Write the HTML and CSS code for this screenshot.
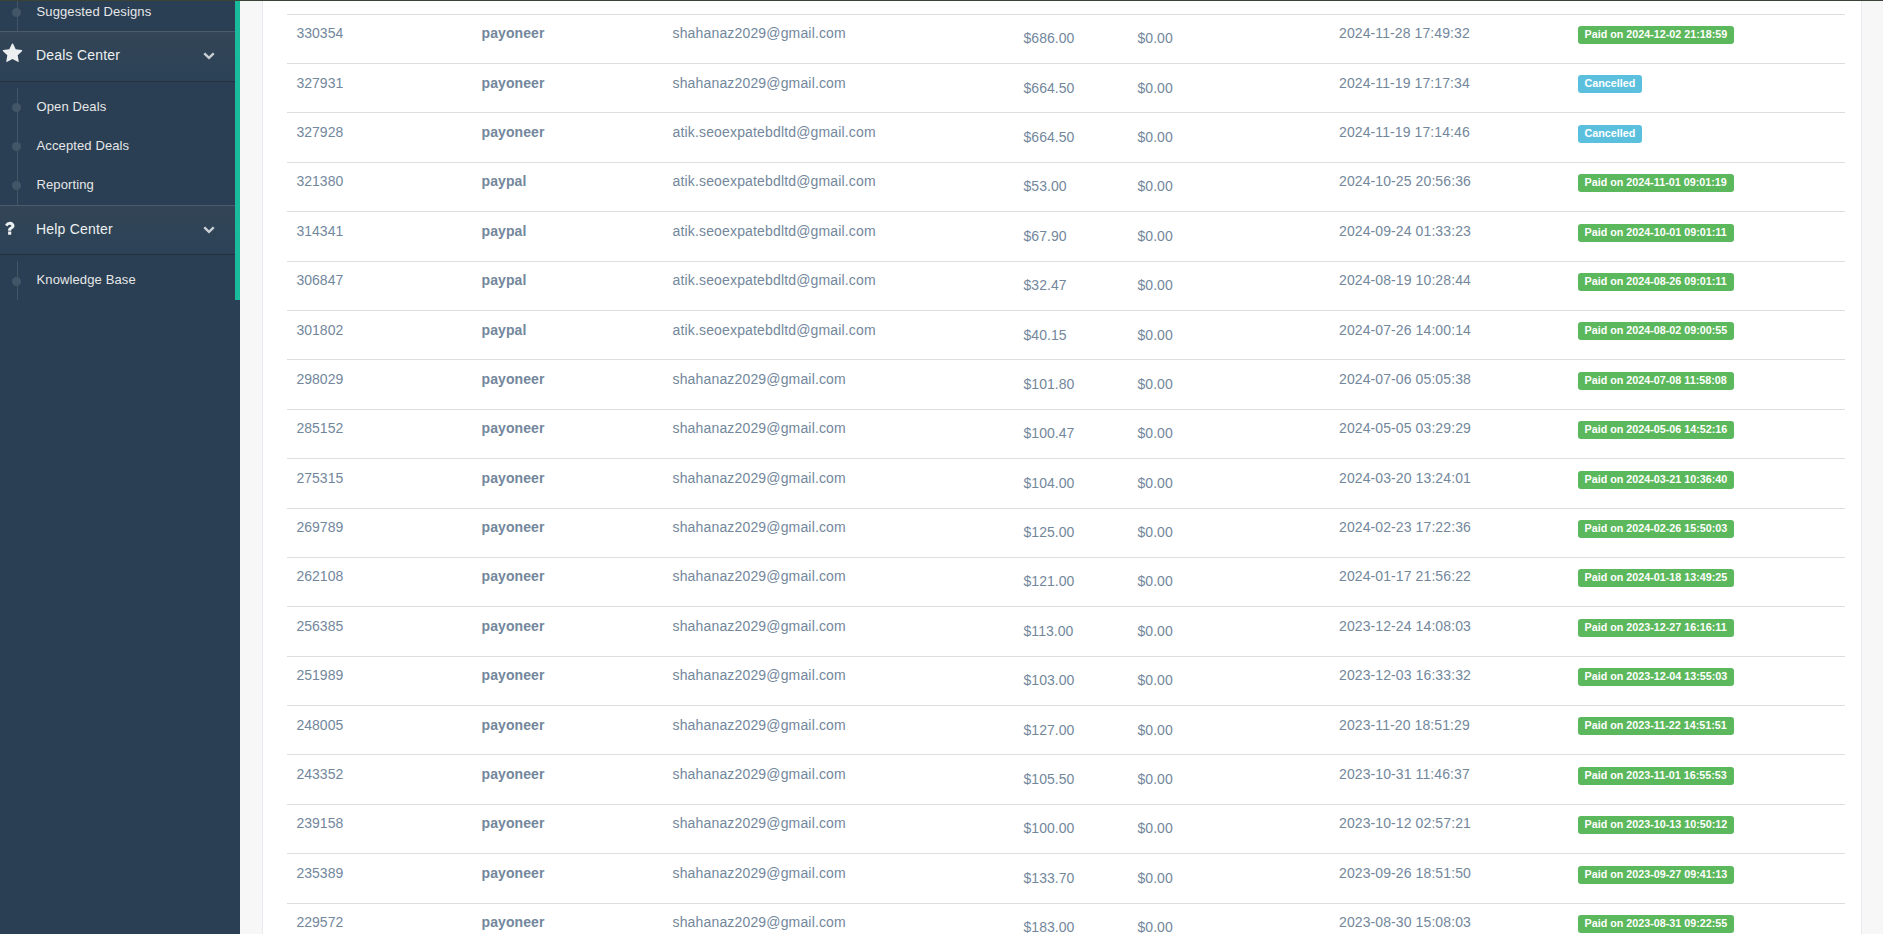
FILE: index.html
```html
<!DOCTYPE html>
<html lang="en">
<head>
<meta charset="utf-8">
<title>Payouts</title>
<link rel="stylesheet" href="styles.css">
</head>
<body>
<div class="page">
  <aside class="sidebar">
    <div class="nav">
      <ul class="sub sub-first"><li>Suggested Designs</li></ul>
      <div class="head">
        <svg class="ico star" viewBox="0 0 1792 1792"><path d="M1728 647q0 22-26 48l-363 354 86 500q1 7 1 20 0 21-10.5 35.5t-30.5 14.5q-19 0-40-12l-449-236-449 236q-22 12-40 12-21 0-31.5-14.5t-10.5-35.5q0-6 2-20l86-500-364-354q-25-27-25-48 0-37 56-46l502-73 225-455q19-41 49-41t49 41l225 455 502 73q56 9 56 46z"/></svg>
        <span>Deals Center</span>
        <svg class="chev" viewBox="0 0 1792 1792"><path d="M1683 808l-742 741q-19 19-45 19t-45-19l-742-741q-19-19-19-45.5t19-45.5l166-165q19-19 45-19t45 19l531 531 531-531q19-19 45-19t45 19l166 165q19 19 19 45.5t-19 45.5z"/></svg>
      </div>
      <ul class="sub"><li>Open Deals</li><li>Accepted Deals</li><li>Reporting</li></ul>
      <div class="head">
        <svg class="ico help" viewBox="0 0 1792 1792"><path d="M1024 1376v240q0 16-12 28t-28 12h-240q-16 0-28-12t-12-28v-240q0-16 12-28t28-12h240q16 0 28 12t12 28zm316-600q0 54-15.5 101t-35 76.5-55 59.5-57.5 43.5-61 35.5q-41 23-68.5 65t-27.5 67q0 17-12 32.5t-28 15.5h-240q-15 0-25.5-18.5t-10.5-37.5v-45q0-83 65-156.5t143-108.5q59-27 84-56t25-76q0-42-46.5-74t-107.5-32q-65 0-108 29-35 25-107 115-13 16-31 16-12 0-25-8l-164-125q-13-10-15.5-25t5.5-28q160-266 464-266 80 0 161 31t146 83 106 127.5 41 158.5z"/></svg>
        <span>Help Center</span>
        <svg class="chev" viewBox="0 0 1792 1792"><path d="M1683 808l-742 741q-19 19-45 19t-45-19l-742-741q-19-19-19-45.5t19-45.5l166-165q19-19 45-19t45 19l531 531 531-531q19-19 45-19t45 19l166 165q19 19 19 45.5t-19 45.5z"/></svg>
      </div>
      <ul class="sub"><li>Knowledge Base</li></ul>
    </div>
  </aside>
  <main class="content">
    <section class="card">
      <table class="payouts">
        <colgroup><col class="c1"><col class="c2"><col class="c3"><col class="c4"><col class="c5"><col class="c6"><col class="c7"></colgroup>
        <tbody>
          <tr><td>330354</td><td class="m">payoneer</td><td class="e">shahanaz2029@gmail.com</td><td class="a">$686.00</td><td class="a">$0.00</td><td class="d">2024-11-28 17:49:32</td><td><span class="label ok">Paid on 2024-12-02 21:18:59</span></td></tr>
          <tr><td>327931</td><td class="m">payoneer</td><td class="e">shahanaz2029@gmail.com</td><td class="a">$664.50</td><td class="a">$0.00</td><td class="d">2024-11-19 17:17:34</td><td><span class="label no">Cancelled</span></td></tr>
          <tr><td>327928</td><td class="m">payoneer</td><td class="e">atik.seoexpatebdltd@gmail.com</td><td class="a">$664.50</td><td class="a">$0.00</td><td class="d">2024-11-19 17:14:46</td><td><span class="label no">Cancelled</span></td></tr>
          <tr><td>321380</td><td class="m">paypal</td><td class="e">atik.seoexpatebdltd@gmail.com</td><td class="a">$53.00</td><td class="a">$0.00</td><td class="d">2024-10-25 20:56:36</td><td><span class="label ok">Paid on 2024-11-01 09:01:19</span></td></tr>
          <tr><td>314341</td><td class="m">paypal</td><td class="e">atik.seoexpatebdltd@gmail.com</td><td class="a">$67.90</td><td class="a">$0.00</td><td class="d">2024-09-24 01:33:23</td><td><span class="label ok">Paid on 2024-10-01 09:01:11</span></td></tr>
          <tr><td>306847</td><td class="m">paypal</td><td class="e">atik.seoexpatebdltd@gmail.com</td><td class="a">$32.47</td><td class="a">$0.00</td><td class="d">2024-08-19 10:28:44</td><td><span class="label ok">Paid on 2024-08-26 09:01:11</span></td></tr>
          <tr><td>301802</td><td class="m">paypal</td><td class="e">atik.seoexpatebdltd@gmail.com</td><td class="a">$40.15</td><td class="a">$0.00</td><td class="d">2024-07-26 14:00:14</td><td><span class="label ok">Paid on 2024-08-02 09:00:55</span></td></tr>
          <tr><td>298029</td><td class="m">payoneer</td><td class="e">shahanaz2029@gmail.com</td><td class="a">$101.80</td><td class="a">$0.00</td><td class="d">2024-07-06 05:05:38</td><td><span class="label ok">Paid on 2024-07-08 11:58:08</span></td></tr>
          <tr><td>285152</td><td class="m">payoneer</td><td class="e">shahanaz2029@gmail.com</td><td class="a">$100.47</td><td class="a">$0.00</td><td class="d">2024-05-05 03:29:29</td><td><span class="label ok">Paid on 2024-05-06 14:52:16</span></td></tr>
          <tr><td>275315</td><td class="m">payoneer</td><td class="e">shahanaz2029@gmail.com</td><td class="a">$104.00</td><td class="a">$0.00</td><td class="d">2024-03-20 13:24:01</td><td><span class="label ok">Paid on 2024-03-21 10:36:40</span></td></tr>
          <tr><td>269789</td><td class="m">payoneer</td><td class="e">shahanaz2029@gmail.com</td><td class="a">$125.00</td><td class="a">$0.00</td><td class="d">2024-02-23 17:22:36</td><td><span class="label ok">Paid on 2024-02-26 15:50:03</span></td></tr>
          <tr><td>262108</td><td class="m">payoneer</td><td class="e">shahanaz2029@gmail.com</td><td class="a">$121.00</td><td class="a">$0.00</td><td class="d">2024-01-17 21:56:22</td><td><span class="label ok">Paid on 2024-01-18 13:49:25</span></td></tr>
          <tr><td>256385</td><td class="m">payoneer</td><td class="e">shahanaz2029@gmail.com</td><td class="a">$113.00</td><td class="a">$0.00</td><td class="d">2023-12-24 14:08:03</td><td><span class="label ok">Paid on 2023-12-27 16:16:11</span></td></tr>
          <tr><td>251989</td><td class="m">payoneer</td><td class="e">shahanaz2029@gmail.com</td><td class="a">$103.00</td><td class="a">$0.00</td><td class="d">2023-12-03 16:33:32</td><td><span class="label ok">Paid on 2023-12-04 13:55:03</span></td></tr>
          <tr><td>248005</td><td class="m">payoneer</td><td class="e">shahanaz2029@gmail.com</td><td class="a">$127.00</td><td class="a">$0.00</td><td class="d">2023-11-20 18:51:29</td><td><span class="label ok">Paid on 2023-11-22 14:51:51</span></td></tr>
          <tr><td>243352</td><td class="m">payoneer</td><td class="e">shahanaz2029@gmail.com</td><td class="a">$105.50</td><td class="a">$0.00</td><td class="d">2023-10-31 11:46:37</td><td><span class="label ok">Paid on 2023-11-01 16:55:53</span></td></tr>
          <tr><td>239158</td><td class="m">payoneer</td><td class="e">shahanaz2029@gmail.com</td><td class="a">$100.00</td><td class="a">$0.00</td><td class="d">2023-10-12 02:57:21</td><td><span class="label ok">Paid on 2023-10-13 10:50:12</span></td></tr>
          <tr><td>235389</td><td class="m">payoneer</td><td class="e">shahanaz2029@gmail.com</td><td class="a">$133.70</td><td class="a">$0.00</td><td class="d">2023-09-26 18:51:50</td><td><span class="label ok">Paid on 2023-09-27 09:41:13</span></td></tr>
          <tr><td>229572</td><td class="m">payoneer</td><td class="e">shahanaz2029@gmail.com</td><td class="a">$183.00</td><td class="a">$0.00</td><td class="d">2023-08-30 15:08:03</td><td><span class="label ok">Paid on 2023-08-31 09:22:55</span></td></tr>
        </tbody>
      </table>
    </section>
  </main>
</div>
</body>
</html>
```
FILE: styles.css
```css
html, body { margin: 0; height: 100%; overflow: hidden; background: #f7f7f7; }
body { font-family: "Liberation Sans", Arial, sans-serif; font-size: 14px; color: #73879c; }
.page { display: flex; height: 934px; border-top: 1px solid #3b4337; box-sizing: border-box; }

.sidebar { width: 240px; flex: none; background: #2a3f54; }
.nav { border-right: 5px solid #1abb9c; height: 299px; }
.sub { list-style: none; margin: 0; padding: 5px 0 1px; position: relative; }
.sub::before { content: ""; position: absolute; left: 17px; top: 6px; bottom: 0; width: 1px; background: #425668; }
.sub li { position: relative; height: 39px; padding-left: 36.5px; font-size: 13px; line-height: 39px; letter-spacing: .12px; color: #e7e7e7; }
.sub li::before { content: ""; position: absolute; left: 12px; top: 16.5px; width: 9px; height: 9px; border-radius: 50%; background: #425668; }
.sub-first { padding: 0; height: 30px; }
.sub-first::before { top: 0; }
.sub-first li { height: 30px; line-height: 21px; }
.sub-first li::before { top: 6.5px; }
.head { display: flex; align-items: center; height: 50.5px; padding: 0 0 2px 36px; box-sizing: border-box; position: relative; font-size: 14px; letter-spacing: .2px; color: #ecf0f1;
  background: linear-gradient(#334556, #2c4257); border-top: 1px solid #4b5b6b; border-bottom: 1px solid #23303f; }
.head span { flex: 1; }
.ico { position: absolute; fill: #ecf0f1; }
.star { left: 2px; top: 10.5px; width: 21px; height: 21px; }
.help { left: 1px; top: 12.5px; width: 18px; height: 18px; }
.chev { width: 12px; height: 12px; fill: #c9cfd5; margin-right: 20px; }

.content { flex: 1; min-width: 0; padding: 0 21px 0 22px; }
.card { background: #fff; border-left: 1px solid #e6e9ed; border-right: 1px solid #e6e9ed; padding: 12.6px 16px 0 24px; height: 100%; box-sizing: border-box; }
.payouts { width: 1558px; table-layout: fixed; border-collapse: collapse; }
.c1 { width: 185px; } .c2 { width: 191px; } .c3 { width: 351px; } .c4 { width: 114px; } .c5 { width: 201.5px; } .c6 { width: 238.5px; } .c7 { width: 277px; }
.payouts td { padding: 8.6px 9.5px 8px; height: 49.4px; box-sizing: border-box; border-top: 1px solid #ddd; vertical-align: top; line-height: 20px; }
.payouts td.m { font-weight: 700; letter-spacing: .1px; }
.payouts td.e { letter-spacing: .16px; }
.payouts td.d { letter-spacing: .1px; }
.payouts td.a { padding-top: 13.6px; letter-spacing: .05px; }
.label { display: inline-block; padding: 3px 7px 4px; border-radius: 3px; font-size: 10.75px; font-weight: 700; line-height: 11px; color: #fff; vertical-align: top; margin-top: 2.8px; }
.ok { background: #5cb85c; }
.no { background: #5bc0de; }
```
